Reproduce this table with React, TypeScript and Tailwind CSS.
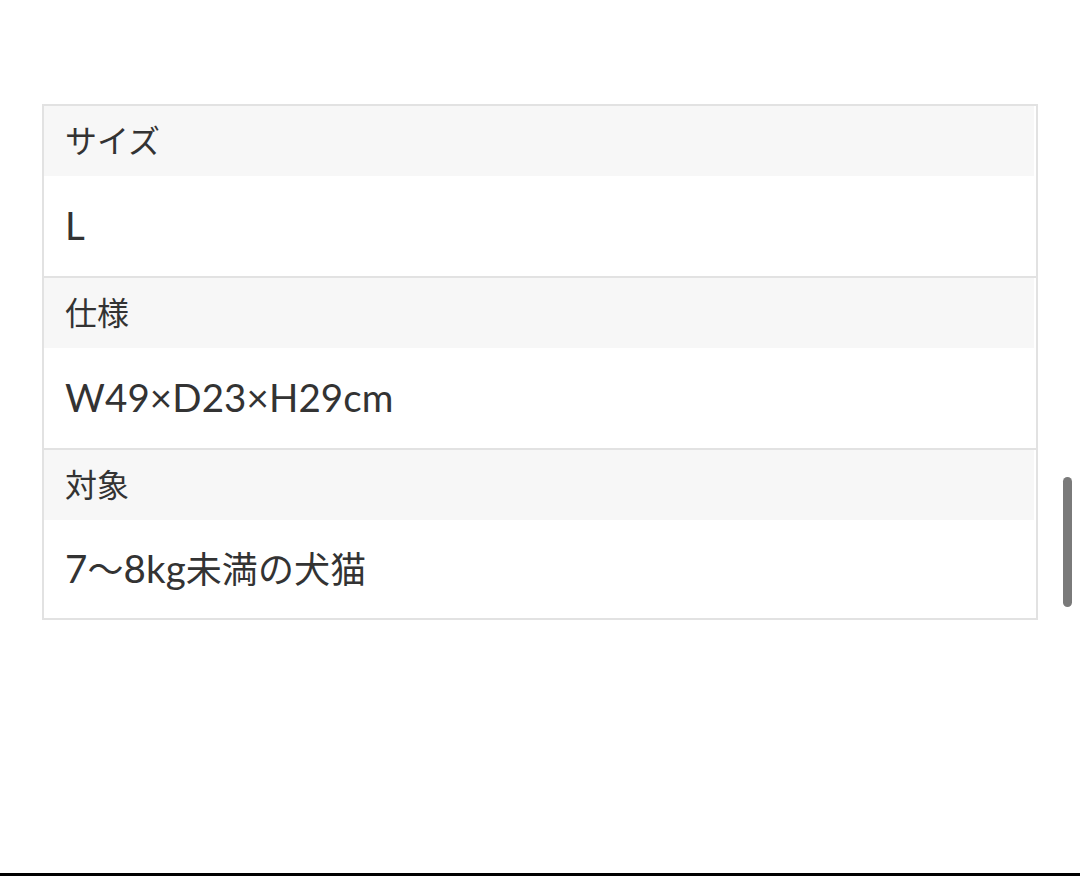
import type { ReactNode } from "react";

const rows: { label: string; value: ReactNode }[] = [
    { label: "サイズ", value: "L" },
    { label: "仕様", value: "W49×D23×H29cm" },
    {
        label: "対象",
        value: (
            <>
                7<span className="text-[36px]">〜</span>8kg<span className="text-[36px]">未満の犬猫</span>
            </>
        ),
    },
];

const SpecRow = ({ label, value, last }: { label: string; value: ReactNode; last: boolean }) => {
    return (
        <div className={last ? "" : "border-b-2 border-[#e2e2e2]"}>
            <div className="h-[70px] mr-[2px] bg-[#f7f7f7] flex items-center pl-[21px] text-[32px]">{label}</div>
            <div className={(last ? "h-[98px]" : "h-[100px]") + " flex items-center pl-[21px] text-[38.5px] tracking-[0.1px]"}>
                <span>{value}</span>
            </div>
        </div>
    );
};

export default function App() {
    return (
        <div
            className="relative h-[876px] w-full bg-white flex flex-col text-[#333333]"
            style={{ fontFamily: "Lato, 'Noto Sans CJK JP', sans-serif" }}
        >
            <div className="pt-[104px] pl-[42px] flex-1">
                <div className="w-[996px] border-2 border-[#e2e2e2]">
                    {rows.map((r, i) => (
                        <SpecRow key={r.label} label={r.label} value={r.value} last={i === rows.length - 1} />
                    ))}
                </div>
            </div>
            <div className="h-[3px] bg-black" />
            {/* scrollbar thumb */}
            <div className="absolute left-[1063px] top-[477px] w-[9px] h-[130px] rounded-full bg-[#7a7a7a]" />
        </div>
    );
}
